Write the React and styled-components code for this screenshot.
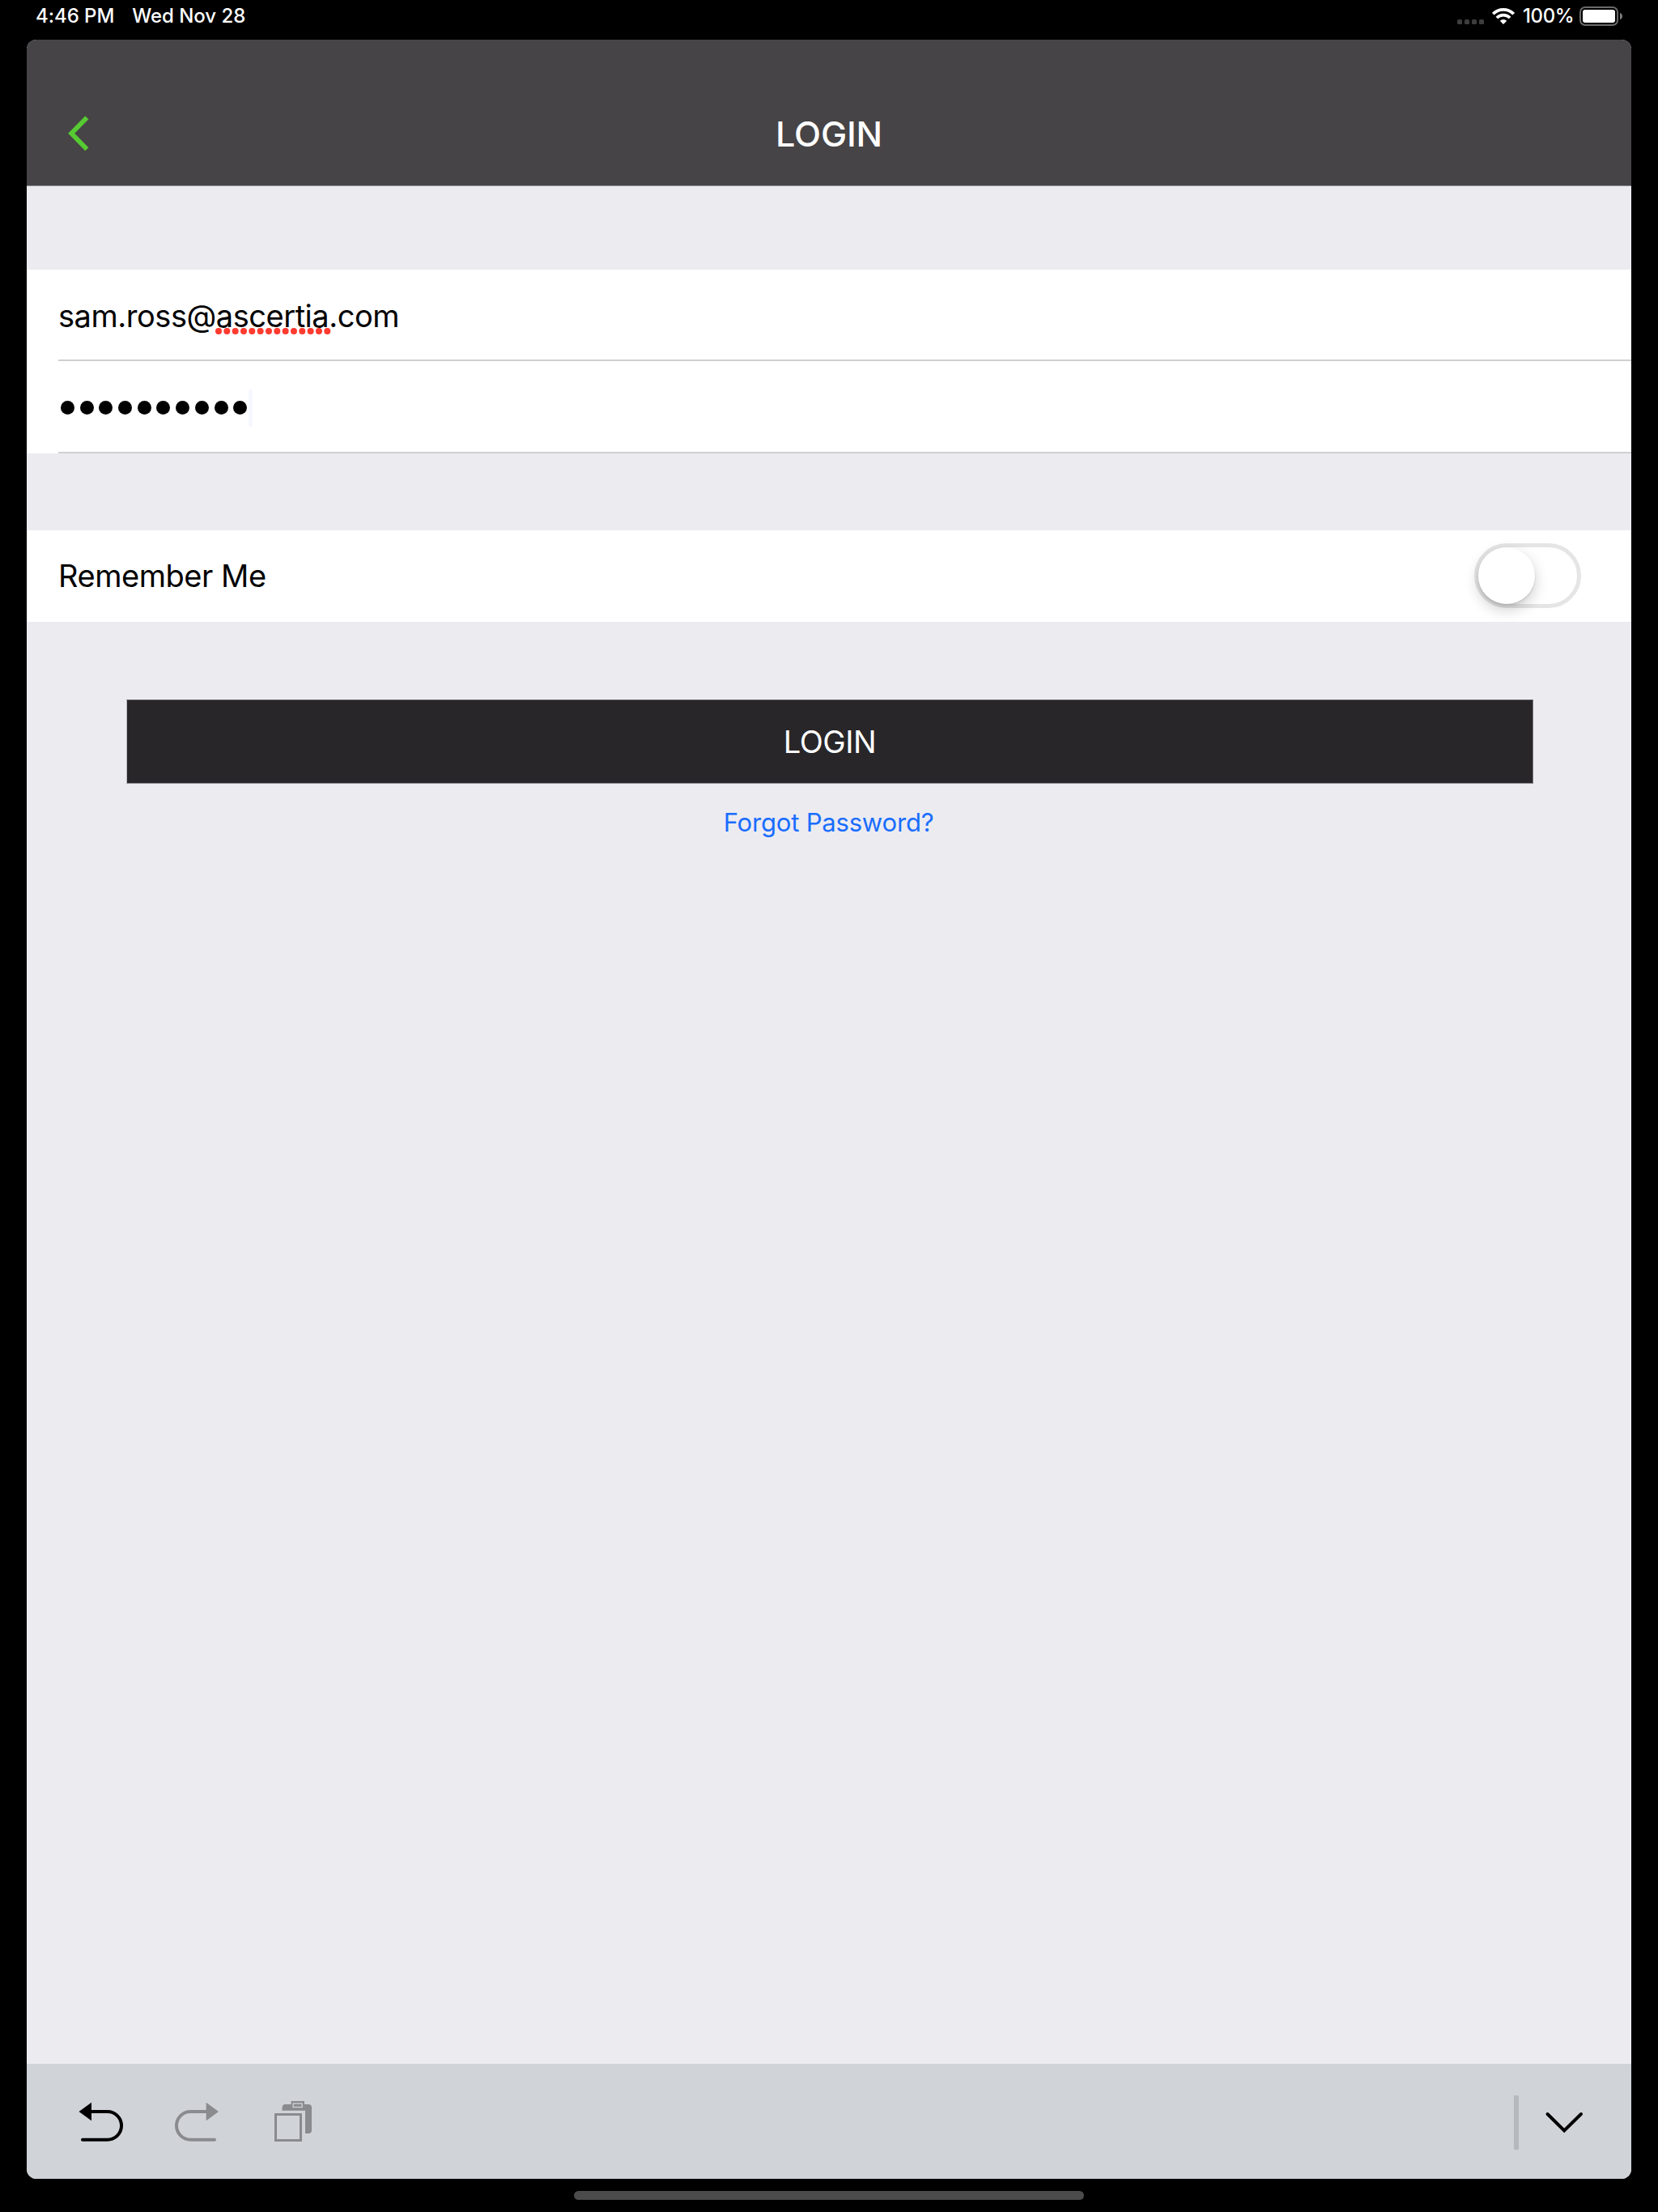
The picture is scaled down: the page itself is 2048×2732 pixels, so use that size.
import { useState } from "react";
import styled, { createGlobalStyle } from "styled-components";

const App = () => {
  const [remember, setRemember] = useState(false);

  return (
    <Screen>
      <GlobalStyle />
      <StatusBar>
        <StatusText>4:46 PM</StatusText>
        <StatusText>Wed Nov 28</StatusText>
        <StatusIcons>
          <SignalDots />
          <Wifi />
          <StatusText $width={70}>100%</StatusText>
          <Battery />
        </StatusIcons>
      </StatusBar>

      <Panel>
        <Header>
          <BackButton aria-label="Back">
            <svg width="28" height="46" viewBox="0 0 28 46">
              <path d="M23.3 3.3 4.2 22.8 23.3 42.3" fill="none" stroke="#56ca32" strokeWidth="5.8" />
            </svg>
          </BackButton>
          <Title>LOGIN</Title>
        </Header>

        <Fields>
          <Field $height={113}>
            <FieldText>sam.ross@<Misspelled>ascertia<SpellDots /></Misspelled>.com</FieldText>
          </Field>
          <Field $height={114}>
            <Password>
              {Array.from({ length: 10 }, (_, i) => <Bullet key={i} />)}
            </Password>
            <Caret />
          </Field>
        </Fields>

        <RememberRow>
          <FieldText>Remember Me</FieldText>
          <Switch
            role="switch"
            aria-checked={remember}
            $on={remember}
            onClick={() => setRemember(!remember)}
          >
            <Knob />
          </Switch>
        </RememberRow>

        <LoginButton>LOGIN</LoginButton>
        <ForgotLink>Forgot Password?</ForgotLink>

        <Toolbar>
          <Undo />
          <Redo />
          <Paste />
          <Divider />
          <Dismiss />
        </Toolbar>
      </Panel>

      <HomeIndicator />
    </Screen>
  );
};

export default App;

const SignalDots = () => (
  <Icon width="33" height="6" viewBox="0 0 33 6" $top={24} $right={10}>
    {[0, 9, 18, 27].map((x) => (
      <rect key={x} x={x} width="6" height="6" rx="1.5" fill="#3d3d3d" />
    ))}
  </Icon>
);

const Wifi = () => (
  <Icon width="28" height="20" viewBox="0 0 28 20" $top={10} $right={10}>
    <g fill="none" stroke="#fff" strokeWidth="3.8">
      <path d="M1.3 7.2a18 18 0 0 1 25.4 0" />
      <path d="M5.9 12a11.5 11.5 0 0 1 16.2 0" />
    </g>
    <path d="M14 20l-4.2-4.3a6 6 0 0 1 8.4 0z" fill="#fff" />
  </Icon>
);

const Battery = () => (
  <Icon width="53" height="24" viewBox="0 0 53 24" $top={8} $right={0}>
    <rect x="1" y="1" width="46" height="22" rx="6" fill="none" stroke="#6b6b6b" strokeWidth="2" />
    <rect x="4" y="4" width="40" height="16" rx="3" fill="#fff" />
    <path d="M50 8c4 1 4 7 0 8z" fill="#7c7c7c" />
  </Icon>
);

const SpellDots = () => (
  <Squiggle width="143" height="8" viewBox="0 0 143 8">
    {Array.from({ length: 14 }, (_, i) => (
      <circle key={i} cx={4 + i * 10.33} cy="4" r="4" fill="#ff3b30" />
    ))}
  </Squiggle>
);

const Undo = () => (
  <ToolIcon width="56" height="50" viewBox="0 0 56 50" $left={64}>
    <path d="M.5 11 16-.3V22.3z" fill="#000" />
    <path d="M15 11H35.700a17.350 17.350 0 0 1 0 34.700H5" fill="none" stroke="#000" strokeWidth="4" strokeLinecap="round" />
  </ToolIcon>
);

const Redo = () => (
  <ToolIcon width="56" height="50" viewBox="0 0 56 50" $left={63}>
    <path d="M54 11 38.700-.3V22.300z" fill="#898b8e" />
    <path d="M38.700 11H19.350a17.350 17.350 0 0 0 0 34.700H49" fill="none" stroke="#898b8e" strokeWidth="4" strokeLinecap="round" />
  </ToolIcon>
);

const Paste = () => (
  <ToolIcon width="46" height="50" viewBox="0 0 46 50" $left={67}>
    <rect x="1.5" y="14.5" width="31" height="32" fill="none" stroke="#898b8e" strokeWidth="3" />
    <path d="M9.5 9.7V7q0-5 4-5H42q4 0 4 4V34q0 4-4 4H38V9.7z" fill="#898b8e" />
    <rect x="20.5" y="-2" width="16.5" height="8" fill="#898b8e" />
    <rect x="23.2" y="1" width="11" height="4.5" fill="#898b8e" stroke="#d0d3d8" strokeWidth="1.3" />
  </ToolIcon>
);

const Dismiss = () => (
  <ToolIcon width="48" height="50" viewBox="0 0 48 50" $left={32} $right={59}>
    <path d="M3.5 14 24.2 34.5 45 14" fill="none" stroke="#000" strokeWidth="4" strokeLinecap="round" />
  </ToolIcon>
);

const GlobalStyle = createGlobalStyle`
  body {
    margin: 0;
    background: #000;
  }
`

const Screen = styled.div`
  box-sizing: border-box;
  width: 2048px;
  height: 2732px;
  padding: 0 33px;
  display: flex;
  flex-direction: column;
  background: #000;
  font-family: Inter, "Liberation Sans", sans-serif;
`

const StatusBar = styled.div`
  height: 49px;
  padding: 0 11px;
  display: flex;
  gap: 22px;
  color: #fff;
`

const StatusText = styled.span`
  width: ${({ $width }) => ($width ? `${$width}px` : "auto")};
  height: 40px;
  font-size: 24px;
  font-weight: 500;
  line-height: 40px;
  letter-spacing: ${({ $width }) => ($width ? "-0.4px" : "-0.05px")};
  white-space: nowrap;
`

const StatusIcons = styled.div`
  margin-left: auto;
  display: flex;
`

const Icon = styled.svg`
  margin-top: ${({ $top }) => $top}px;
  margin-right: ${({ $right }) => $right}px;
`

const Panel = styled.main`
  height: 2642px;
  display: flex;
  flex-direction: column;
  border-radius: 12px;
  overflow: hidden;
  background: #ebebf0;
`

const Header = styled.header`
  box-sizing: border-box;
  height: 181px;
  padding: 52px 51px 0;
  display: grid;
  grid-template-columns: 28px 1fr 28px;
  align-items: center;
  background: #464446;
  border-bottom: 1px solid #918f94;
`

const BackButton = styled.button`
  height: 46px;
  padding: 0;
  border: 0;
  background: none;
`

const Title = styled.h1`
  margin: 0;
  padding-bottom: 1px;
  color: #fff;
  font-size: 43px;
  font-weight: 550;
  letter-spacing: -0.1px;
  text-align: center;
`

const Fields = styled.div`
  margin-top: 103px;
  padding-left: 39px;
  background: #fff;
`

const Field = styled.div`
  box-sizing: border-box;
  height: ${({ $height }) => $height}px;
  padding-top: 3px;
  display: flex;
  align-items: center;
  border-bottom: 2px solid #d0cfd3;
`

const FieldText = styled.span`
  font-size: 38px;
  letter-spacing: -0.46px;
  color: #000;
`

const Misspelled = styled.span`
  position: relative;
`

const Squiggle = styled.svg`
  position: absolute;
  left: -1px;
  bottom: 0;
`

const Password = styled.div`
  padding-left: 3px;
  display: flex;
  gap: 6.7px;
`

const Bullet = styled.span`
  width: 17px;
  height: 17px;
  border-radius: 50%;
  background: #000;
`

const Caret = styled.span`
  width: 5px;
  height: 46px;
  margin-left: 2px;
  border-radius: 2px;
  background: #f7f8ff;
`

const RememberRow = styled.div`
  box-sizing: border-box;
  height: 113px;
  margin-top: 95px;
  padding: 0 62px 1px 39px;
  display: flex;
  align-items: center;
  justify-content: space-between;
  background: #fff;
`

const Switch = styled.button`
  box-sizing: border-box;
  width: 132px;
  height: 80px;
  padding: 0;
  display: flex;
  justify-content: ${({ $on }) => ($on ? "flex-end" : "flex-start")};
  border: 5px solid #e5e5e5;
  border-radius: 40px;
  background: ${({ $on }) => ($on ? "#4cd964" : "#fff")};
`

const Knob = styled.span`
  width: 70px;
  height: 70px;
  border-radius: 50%;
  background: #fff;
  box-shadow: 0 7px 18px rgba(0, 0, 0, 0.2), 0 2px 3px rgba(0, 0, 0, 0.1);
`

const LoginButton = styled.button`
  width: 1738px;
  height: 104px;
  margin: 96px 0 0 123px;
  padding: 0;
  border: 1px solid;
  border-color: #5a595d #77767b #8f8d93 #bebdc2;
  background: #282629;
  color: #fff;
  font-family: inherit;
  font-size: 38px;
  letter-spacing: -0.4px;
`

const ForgotLink = styled.a`
  margin-top: 28px;
  padding-right: 1px;
  color: #1a6dff;
  font-size: 31px;
  letter-spacing: -0.18px;
  line-height: 40px;
  text-align: center;
`

const Toolbar = styled.footer`
  height: 142px;
  margin-top: auto;
  display: flex;
  align-items: flex-start;
  background: #d0d3d8;
`

const ToolIcon = styled.svg`
  flex: none;
  margin: 48px ${({ $right }) => $right || 0}px 0 ${({ $left }) => $left}px;
  overflow: visible;
`

const Divider = styled.div`
  width: 6px;
  height: 67px;
  margin: 39px 0 0 auto;
  background: #b5b8bc;
`

const HomeIndicator = styled.div`
  width: 630px;
  height: 11px;
  margin: 15px auto 0;
  border-radius: 6px;
  background: #4b4b4b;
`
